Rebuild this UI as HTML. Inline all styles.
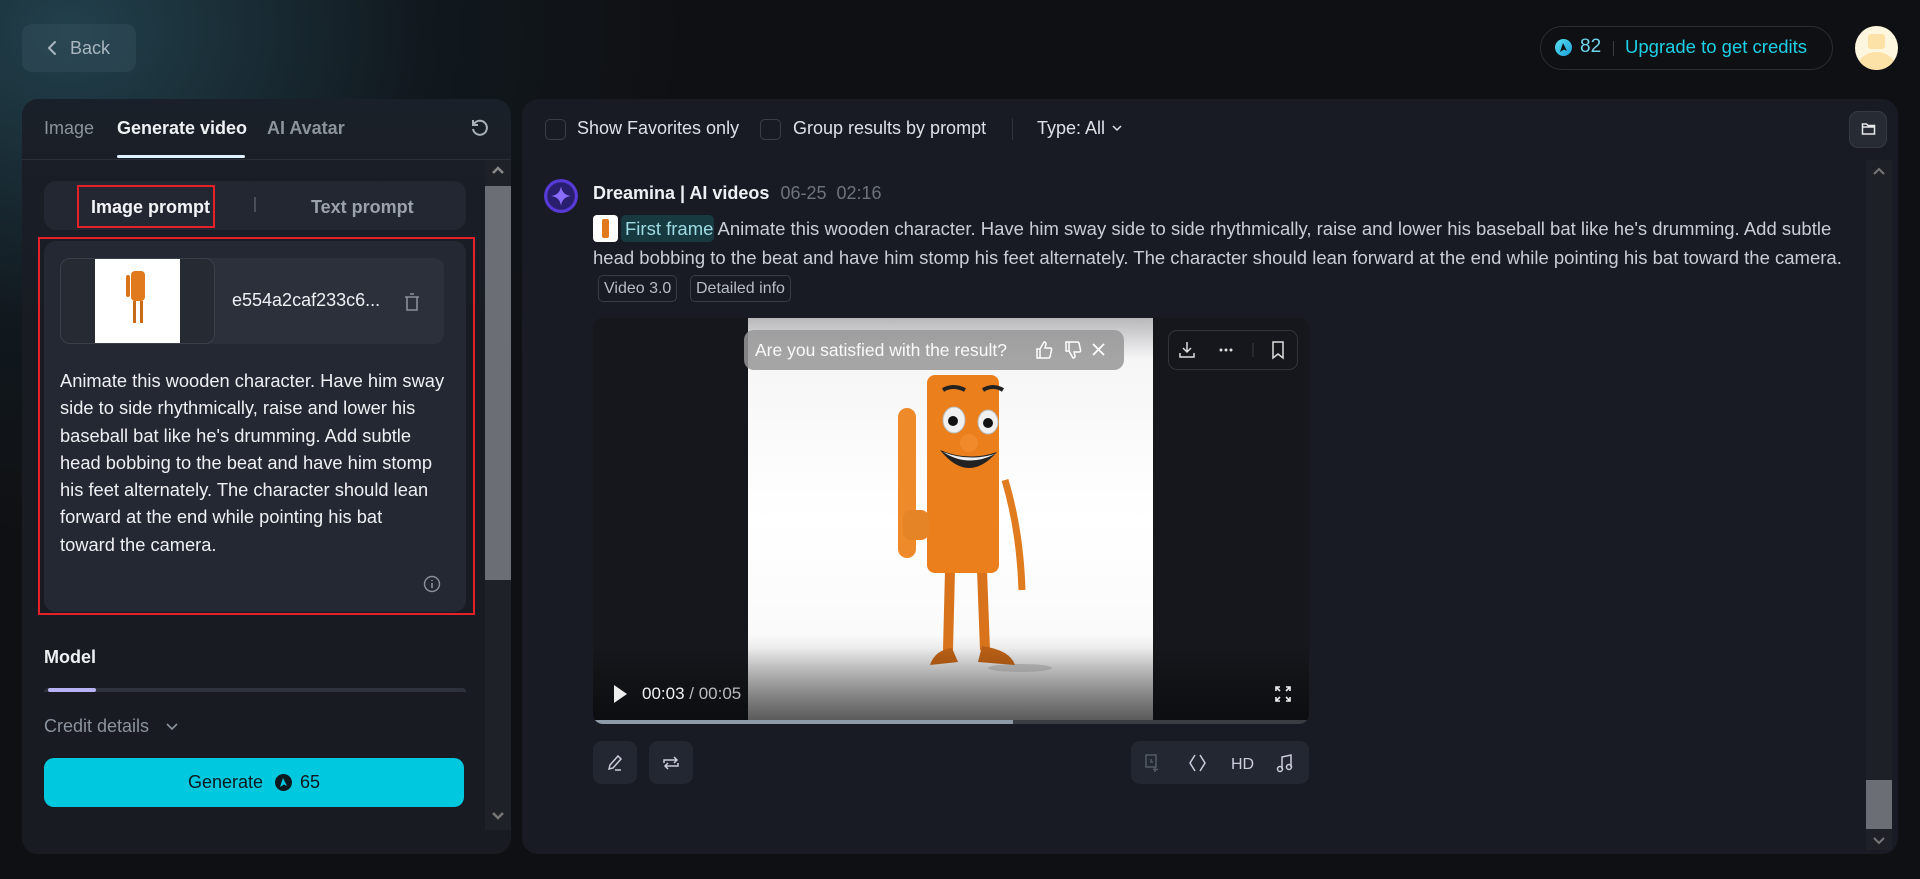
<!DOCTYPE html>
<html><head><meta charset="utf-8"><style>
*{box-sizing:border-box;margin:0;padding:0}
body{width:1920px;height:879px;overflow:hidden;background:#0f1013;font-family:"Liberation Sans",sans-serif;color:#e6e8ec;position:relative}
.glow{position:absolute;left:-200px;top:-250px;width:900px;height:800px;background:radial-gradient(ellipse at 30% 35%,rgba(40,80,95,.75),rgba(20,40,50,.35) 40%,rgba(15,16,19,0) 70%)}
.abs{position:absolute}
.back{left:22px;top:24px;width:114px;height:48px;border-radius:10px;background:rgba(60,85,100,.35);color:#aab6c0;font-size:18px;display:flex;align-items:center;padding-left:24px;gap:10px}
.lp{left:22px;top:99px;width:489px;height:755px;border-radius:16px;background:linear-gradient(#1a2029,#181b22 30%);overflow:hidden}
.rp{left:522px;top:99px;width:1376px;height:755px;border-radius:16px;background:#181b23}
.tab{font-size:18px;top:118px;color:#8b939c}
.txt{font-size:18.3px;line-height:27.3px;color:#eef0f3;white-space:nowrap}
.cb{width:21px;height:21px;border:1.5px solid #3a3e47;border-radius:5px;top:119px}
.tl{font-size:18px;color:#dde1e6;top:118px}
</style></head><body>
<div class="glow"></div>
<div class="abs back"><svg width="14" height="16" viewBox="0 0 14 16"><path d="M9 2L3 8l6 6" stroke="#aab6c0" stroke-width="2" fill="none" stroke-linecap="round"/></svg>Back</div>

<div class="abs" style="left:1540px;top:26px;width:293px;height:44px;border:1px solid #2a2d33;border-radius:22px;"></div>
<div class="abs" style="left:1555px;top:39px;width:17px;height:17px;border-radius:50%;background:linear-gradient(135deg,#5be0f0,#1aa0d8)"><svg width="17" height="17" viewBox="0 0 17 17"><path d="M5 13L8 4l4 8-3-1.5z" fill="#0f1013"/></svg></div>
<div class="abs" style="left:1580px;top:36px;font-size:19px;color:#6fd4ec">82</div>
<div class="abs" style="left:1613px;top:41px;width:1px;height:15px;background:#3a3e45"></div>
<div class="abs" style="left:1625px;top:36px;font-size:18.5px;color:#1ed0e6">Upgrade to get credits</div>
<div class="abs" style="left:1855px;top:26px;width:43px;height:44px;border-radius:50%;background:#fff6e0;overflow:hidden"><div class="abs" style="left:13px;top:8px;width:17px;height:15px;border-radius:3px;background:#fde2a8"></div><div class="abs" style="left:2px;top:26px;width:39px;height:32px;border-radius:50%;background:#fde2a8"></div></div>

<div class="abs lp">
 <div class="abs" style="left:0;top:60px;width:489px;height:1px;background:#2a2f38"></div>
 <div class="abs tab" style="left:22px;top:19px">Image</div>
 <div class="abs tab" style="left:95px;top:19px;color:#eef1f4;font-weight:bold">Generate video</div>
 <div class="abs" style="left:95px;top:56px;width:128px;height:3px;background:#e0f2ff;border-radius:2px"></div>
 <div class="abs tab" style="left:245px;top:19px;font-weight:bold">AI Avatar</div>
 <svg class="abs" style="left:448px;top:19px" width="20" height="20" viewBox="0 0 20 20"><path d="M4 6A7 7 0 1 1 3 11" stroke="#aab0b8" stroke-width="2" fill="none"/><path d="M3 2v5h5" stroke="#aab0b8" stroke-width="2" fill="none"/></svg>
 <div class="abs" style="left:463px;top:61px;width:26px;height:670px;background:#1e2128"></div>
 <div class="abs" style="left:463px;top:87px;width:26px;height:394px;background:#6b6e75"></div>
 <svg class="abs" style="left:469px;top:66px" width="14" height="10"><path d="M2 8l5-5 5 5" stroke="#888" stroke-width="2.5" fill="none"/></svg>
 <svg class="abs" style="left:469px;top:712px" width="14" height="10"><path d="M2 2l5 5 5-5" stroke="#777" stroke-width="2.5" fill="none"/></svg>
 <svg class="abs" style="left:6px;top:734px" width="10" height="14"><path d="M8 2L3 7l5 5" stroke="#666" stroke-width="2.5" fill="none"/></svg>
 <svg class="abs" style="left:445px;top:734px" width="10" height="14"><path d="M2 2l5 5-5 5" stroke="#666" stroke-width="2.5" fill="none"/></svg>
 <div class="abs" style="left:22px;top:82px;width:422px;height:49px;border-radius:12px;background:#232731"></div>
 <div class="abs" style="left:69px;top:98px;font-size:18px;font-weight:bold;color:#f2f4f7">Image prompt</div>
 <div class="abs" style="left:55px;top:86px;width:138px;height:43px;border:2.5px solid #e8202a"></div>
 <div class="abs" style="left:232px;top:98px;width:1.5px;height:15px;background:#4a4e56"></div>
 <div class="abs" style="left:289px;top:98px;font-size:18px;font-weight:bold;color:#9ba2ab">Text prompt</div>
 <div class="abs" style="left:22px;top:142px;width:422px;height:371px;border-radius:12px;background:#242832"></div>
 <div class="abs" style="left:16px;top:138px;width:437px;height:378px;border:2.5px solid #e8202a"></div>
 <div class="abs" style="left:38px;top:159px;width:384px;height:86px;border-radius:10px;background:#2c303b"></div>
 <div class="abs" style="left:38px;top:159px;width:155px;height:86px;border-radius:10px;border:1px solid #3a3f4a;background:#262a33;overflow:hidden">
  <div class="abs" style="left:34px;top:0;width:85px;height:86px;background:#fff">
   <div class="abs" style="left:36px;top:12px;width:14px;height:30px;border-radius:4px;background:#e07a1c"></div>
   <div class="abs" style="left:31px;top:16px;width:4px;height:22px;border-radius:2px;background:#d8741a"></div>
   <div class="abs" style="left:38px;top:42px;width:3px;height:22px;background:#c86a18"></div>
   <div class="abs" style="left:45px;top:42px;width:3px;height:22px;background:#c86a18"></div>
  </div>
 </div>
 <div class="abs" style="left:210px;top:191px;font-size:18px;color:#eef0f3">e554a2caf233c6...</div>
 <svg class="abs" style="left:381px;top:193px" width="18" height="20" viewBox="0 0 18 20"><path d="M2 5h14M7 2h4M4 5v13h10V5" stroke="#8a909a" stroke-width="1.6" fill="none"/></svg>
 <div class="abs txt" style="left:38px;top:268px">Animate this wooden character. Have him sway<br>side to side rhythmically, raise and lower his<br>baseball bat like he's drumming. Add subtle<br>head bobbing to the beat and have him stomp<br>his feet alternately. The character should lean<br>forward at the end while pointing his bat<br>toward the camera.</div>
 <svg class="abs" style="left:401px;top:476px" width="18" height="18" viewBox="0 0 18 18"><circle cx="9" cy="9" r="7.5" stroke="#8a909a" stroke-width="1.4" fill="none"/><path d="M9 8v5M9 5v1" stroke="#8a909a" stroke-width="1.6"/></svg>
 <div class="abs" style="left:22px;top:548px;font-size:18px;font-weight:bold;color:#eef1f4">Model</div>
 <div class="abs" style="left:22px;top:589px;width:422px;height:4px;border-radius:4px 4px 0 0;background:#2e323c"></div>
 <div class="abs" style="left:26px;top:589px;width:48px;height:4px;border-radius:4px;background:#b7b2f4"></div>
 <div class="abs" style="left:0;top:593px;width:463px;height:162px;background:#181b22"></div>
 <div class="abs" style="left:22px;top:617px;font-size:18px;color:#8b939c">Credit details</div>
 <svg class="abs" style="left:143px;top:622px" width="14" height="10"><path d="M2 3l5 5 5-5" stroke="#8b939c" stroke-width="1.6" fill="none"/></svg>
 <div class="abs" style="left:22px;top:659px;width:420px;height:49px;border-radius:10px;background:#00c8de;display:flex;align-items:center;justify-content:center;gap:8px;color:#0c1a20;font-size:18px">Generate <span style="display:inline-flex;width:17px;height:17px;border-radius:50%;background:#0c1a20;margin-left:4px"><svg width="17" height="17"><path d="M5 13L8 4l4 8-3-1.5z" fill="#00c8de"/></svg></span>65</div>
</div>

<div class="abs rp"></div>
<div class="abs cb" style="left:545px"></div>
<div class="abs tl" style="left:577px">Show Favorites only</div>
<div class="abs cb" style="left:760px"></div>
<div class="abs tl" style="left:793px">Group results by prompt</div>
<div class="abs" style="left:1012px;top:118px;width:1px;height:22px;background:#2e323a"></div>
<div class="abs tl" style="left:1037px">Type: All</div>
<svg class="abs" style="left:1111px;top:123px" width="12" height="10"><path d="M2 3l4 4 4-4" stroke="#dde1e6" stroke-width="1.5" fill="none"/></svg>
<div class="abs" style="left:1849px;top:111px;width:38px;height:37px;border-radius:9px;background:#272b33;border:1px solid #353a43"></div>
<svg class="abs" style="left:1861px;top:122px" width="15" height="14" viewBox="0 0 15 14"><path d="M1.5 2h4l1.5 1.5h6.5V12h-12zM1.5 5h12" stroke="#e6e8ec" stroke-width="1.5" fill="none"/></svg>
<div class="abs" style="left:1866px;top:160px;width:26px;height:690px;background:#1d2027"></div>
<div class="abs" style="left:1866px;top:780px;width:26px;height:49px;background:#6b6e75"></div>
<svg class="abs" style="left:1872px;top:166px" width="14" height="10"><path d="M2 8l5-5 5 5" stroke="#777" stroke-width="2" fill="none"/></svg>
<svg class="abs" style="left:1872px;top:836px" width="14" height="10"><path d="M2 2l5 5 5-5" stroke="#777" stroke-width="2" fill="none"/></svg>

<div class="abs" style="left:544px;top:179px;width:34px;height:34px;border-radius:50%;background:radial-gradient(#2a1f6e 55%,#5b3ce0 60%,#3a2a99);"><svg width="34" height="34" viewBox="0 0 34 34"><path d="M17 7Q18 16 27 17Q18 18 17 27Q16 18 7 17Q16 16 17 7z" fill="#8a6cff"/></svg></div>
<div class="abs" style="left:593px;top:183px;font-size:18px;font-weight:bold;color:#eef1f4">Dreamina | AI videos <span style="font-weight:normal;color:#6d737d;margin-left:6px">06-25&nbsp;&nbsp;02:16</span></div>
<div class="abs" style="left:593px;top:215px;width:25px;height:27px;border-radius:4px;background:#fff"><div class="abs" style="left:9px;top:4px;width:7px;height:19px;border-radius:2px;background:#e07a1c"></div></div>
<div class="abs" style="left:621px;top:215px;width:93px;height:27px;border-radius:5px;background:#163a40"></div>
<div class="abs" style="font-size:18.5px;color:#c9ced5;left:593px;top:214px;line-height:29px;white-space:nowrap"><span style="margin-left:32px;color:#9fdbe4">First frame</span> Animate this wooden character. Have him sway side to side rhythmically, raise and lower his baseball bat like he's drumming. Add subtle<br>head bobbing to the beat and have him stomp his feet alternately. The character should lean forward at the end while pointing his bat toward the camera.</div>
<div class="abs" style="left:598px;top:275px;height:27px;border:1px solid #383c45;border-radius:5px;font-size:16px;color:#b8bec6;padding:4px 5px">Video 3.0</div>
<div class="abs" style="left:690px;top:275px;height:27px;border:1px solid #383c45;border-radius:5px;font-size:16px;color:#b8bec6;padding:4px 5px">Detailed info</div>

<div class="abs" style="left:593px;top:318px;width:716px;height:406px;border-radius:10px;background:#15171c;overflow:hidden">
 <div class="abs" style="left:155px;top:0;width:405px;height:406px;background:linear-gradient(#b8b8ba,#f6f6f7 10%,#fff 50%,#fafafa 78%,#9a9a9c)"></div>
 <svg class="abs" style="left:0;top:0" width="716" height="406" viewBox="593 318 716 406">
  <ellipse cx="1020" cy="668" rx="32" ry="4" fill="#bbb"/>
  <path d="M950 570L948 650M982 570L985 650" stroke="#d8731c" stroke-width="10"/>
  <path d="M930 665Q935 650 952 648L958 662z" fill="#b85f15"/>
  <path d="M978 662L982 646Q1010 650 1015 665z" fill="#b85f15"/>
  <path d="M1005 480Q1020 530 1022 590" stroke="#e07b1e" stroke-width="7" fill="none"/>
  <rect x="898" y="408" width="18" height="150" rx="9" fill="#ee8a2a"/>
  <rect x="927" y="375" width="72" height="198" rx="8" fill="#ea7f1c"/>
  <rect x="903" y="510" width="26" height="30" rx="8" fill="#e58426"/>
  <path d="M943 390q10-6 22 0M983 390q10-6 20 0" stroke="#222" stroke-width="4" fill="none"/>
  <ellipse cx="954" cy="420" rx="11" ry="13" fill="#f0f0f0" stroke="#bbb"/><ellipse cx="988" cy="422" rx="10" ry="12" fill="#f0f0f0" stroke="#bbb"/>
  <circle cx="953" cy="421" r="5" fill="#111"/><circle cx="988" cy="423" r="5" fill="#111"/>
  <circle cx="969" cy="443" r="9" fill="#f08a2a"/>
  <path d="M940 450Q968 485 997 452Q968 462 940 450z" fill="#222"/><path d="M943 452Q968 462 995 454Q968 468 943 452z" fill="#eee"/>
 </svg>
 <div class="abs" style="left:0;top:330px;width:716px;height:76px;background:linear-gradient(rgba(0,0,0,0),rgba(0,0,0,.45))"></div>
 <div class="abs" style="left:0;top:402px;width:716px;height:4px;background:#3a3d44"></div>
 <div class="abs" style="left:0;top:402px;width:420px;height:4px;background:#8e9aa5"></div>
 <svg class="abs" style="left:19px;top:366px" width="16" height="20"><path d="M2 1l13 9-13 9z" fill="#eee"/></svg>
 <div class="abs" style="left:49px;top:366px;font-size:17px;color:#f0f0f0">00:03 <span style="color:#bbb">/ 00:05</span></div>
 <svg class="abs" style="left:681px;top:367px" width="18" height="18" viewBox="0 0 18 18"><path d="M2 6V2h4M2 2l4 4M16 6V2h-4M16 2l-4 4M2 12v4h4M2 16l4-4M16 12v4h-4M16 16l-4-4" stroke="#eee" stroke-width="1.6" fill="none"/></svg>
 <div class="abs" style="left:151px;top:12px;width:380px;height:40px;border-radius:10px;background:rgba(150,150,152,.85)"></div>
 <div class="abs" style="left:162px;top:22px;font-size:17.5px;color:#fafafa">Are you satisfied with the result?</div>
 <svg class="abs" style="left:441px;top:22px" width="80" height="20" viewBox="0 0 80 20"><path d="M3 9h3v9H3zM6 9l4-7q2 0 2 2l-1 4h5q2 0 1.5 2l-1.5 7q-.5 1-2 1H6" stroke="#fff" stroke-width="1.5" fill="none"/><path d="M32 11h3V2h-3zM35 11l4 7q2 0 2-2l-1-4h5q2 0 1.5-2L45 3q-.5-1-2-1h-8" stroke="#fff" stroke-width="1.5" fill="none"/><path d="M59 4l11 11M70 4L59 15" stroke="#fff" stroke-width="1.8"/></svg>
 <div class="abs" style="left:575px;top:12px;width:130px;height:40px;border-radius:9px;background:#15171c;border:1px solid #30343c"></div>
 <svg class="abs" style="left:585px;top:22px" width="110" height="20" viewBox="0 0 110 20"><path d="M9 2v10M5 8l4 4 4-4M2 13v4h14v-4" stroke="#ddd" stroke-width="1.5" fill="none"/><circle cx="43" cy="10" r="1.5" fill="#ddd"/><circle cx="48" cy="10" r="1.5" fill="#ddd"/><circle cx="53" cy="10" r="1.5" fill="#ddd"/><path d="M75 3v14" stroke="#3a3e46"/><path d="M95 2h10v16l-5-4-5 4z" stroke="#ddd" stroke-width="1.5" fill="none"/></svg>
</div>

<div class="abs" style="left:593px;top:741px;width:44px;height:43px;border-radius:9px;background:#232731"></div>
<svg class="abs" style="left:605px;top:753px" width="20" height="20" viewBox="0 0 20 20"><path d="M4 16l1-4 8-9 3 3-8 9-4 1zM10 17h6" stroke="#ccd" stroke-width="1.5" fill="none"/></svg>
<div class="abs" style="left:649px;top:741px;width:44px;height:43px;border-radius:9px;background:#232731"></div>
<svg class="abs" style="left:661px;top:753px" width="20" height="20" viewBox="0 0 20 20"><path d="M3 10V7h13M13 4l3 3-3 3M17 10v3H4M7 16l-3-3 3-3" stroke="#ccd" stroke-width="1.5" fill="none"/></svg>
<div class="abs" style="left:1131px;top:741px;width:178px;height:43px;border-radius:9px;background:#232731"></div>
<svg class="abs" style="left:1143px;top:752px" width="160" height="22" viewBox="0 0 160 22"><path d="M3 3h10v12H3zM8 7v3h2M12 15v5M10 17.5h5" stroke="#555b66" stroke-width="1.5" fill="none"/><path d="M52 3l-5 8 5 8M57 3l5 8-5 8" stroke="#ccd" stroke-width="1.5" fill="none"/><text x="88" y="17" font-family="Liberation Sans" font-size="16" fill="#ccd">HD</text><path d="M139 17V5l9-2v12" stroke="#ccd" stroke-width="1.5" fill="none"/><circle cx="137" cy="17" r="2.5" stroke="#ccd" stroke-width="1.5" fill="none"/><circle cx="146" cy="15" r="2.5" stroke="#ccd" stroke-width="1.5" fill="none"/></svg>
</body></html>
